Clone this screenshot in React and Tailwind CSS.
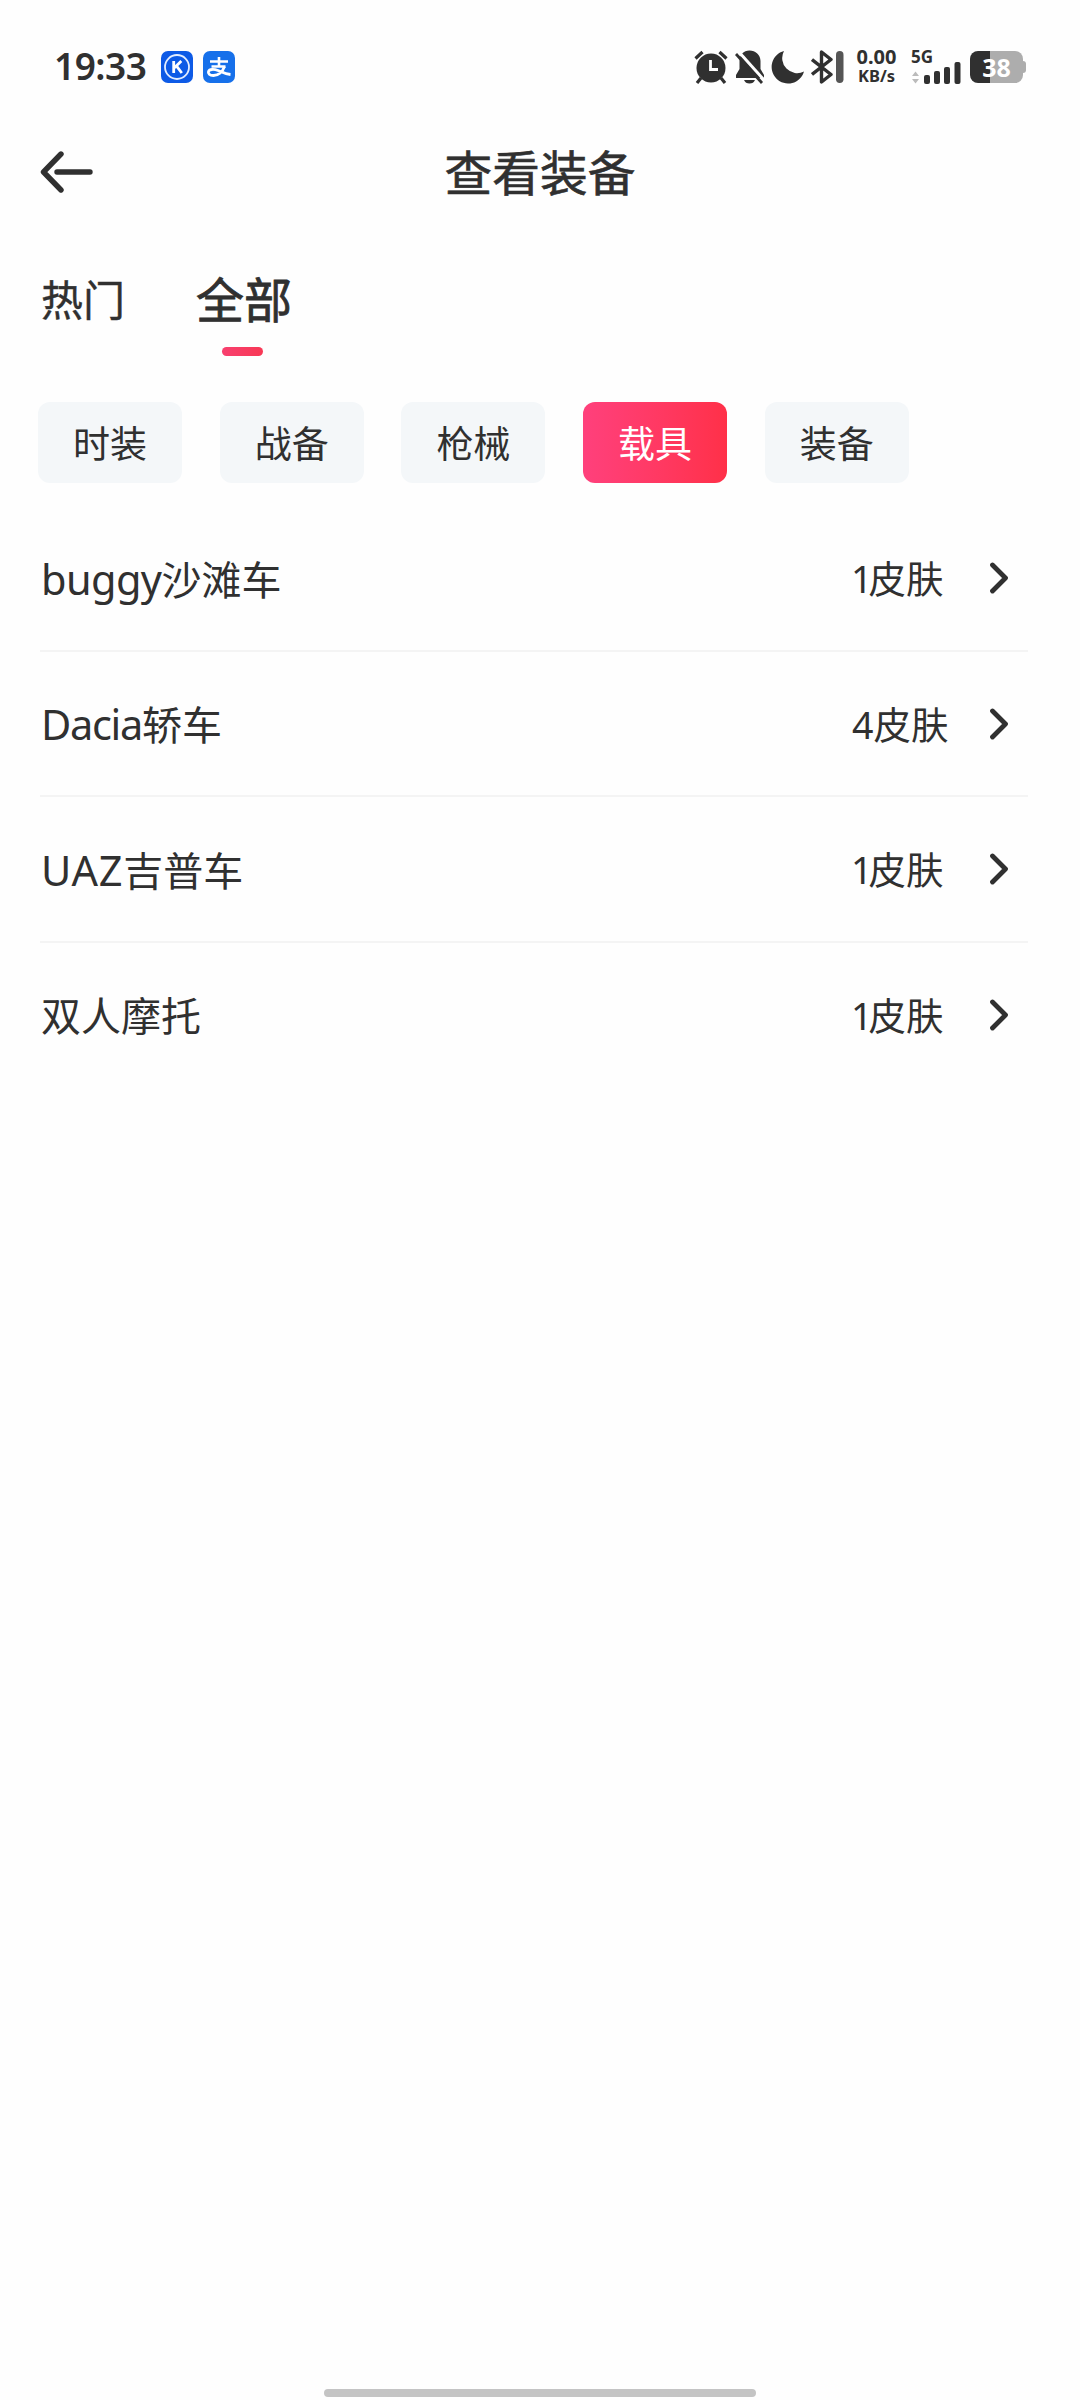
import React, { useState } from "react";

const tabs = ["热门", "全部"];
const categories = ["时装", "战备", "枪械", "载具", "装备"];
const vehicles = [
  { latin: "buggy", name: "沙滩车", skins: 1, spacing: "tracking-[-0.6px]" },
  { latin: "Dacia", name: "轿车", skins: 4, spacing: "tracking-[-1.3px]" },
  { latin: "UAZ", name: "吉普车", skins: 1, spacing: "tracking-[0.7px]" },
  { latin: "", name: "双人摩托", skins: 1, spacing: "" },
];

const StatusBar = () => {
  return (
    <div className="flex h-[134px] items-center pl-[54px] pr-[54px] text-[#303030]">
      <div className="w-[107px] whitespace-nowrap pb-[3px] text-[37px] font-semibold leading-none tracking-[-0.5px]">19:33</div>

      {/* App notifications */}
      <svg className="h-8 w-8" viewBox="0 0 32 32">
        <rect width="32" height="32" rx="7" fill="#0d5ae6" />
        <circle cx="16" cy="16" r="12" fill="none" stroke="#e3edff" strokeWidth="1.8" />
        <path d="M12.7 10v12M20.3 10l-6.8 6.7M15.6 15.2l5.2 6.8" fill="none" stroke="#fff" strokeWidth="2.8" />
      </svg>
      <svg className="ml-[10px] h-8 w-8" viewBox="0 0 32 32" fill="none" stroke="#fff">
        <rect width="32" height="32" rx="7" fill="#1670ea" stroke="none" />
        <path d="M7 10.500h18M16 6v9.500M8.500 15.500h14" strokeWidth="2.600" />
        <path d="M21.500 15.500C19.500 21 15 24.500 10.500 24.500C6.500 24.500 4.800 22.500 5.500 20.500C6.500 18 11 18 15 19.500C19 21 22 23 27.500 23.500" strokeWidth="2.800" />
      </svg>

      <div className="ml-auto flex items-center">
        {/* Alarm */}
        <svg className="h-[34px] w-[34px]" viewBox="0 0 34 34">
          <circle cx="17" cy="18" r="14.5" fill="#303030" />
          <path d="M1.500 8.500l7-6.500M32.500 8.500l-7-6.500M7 28l-4 5M27 28l4 5" stroke="#303030" strokeWidth="3.2" />
          <path d="M16.500 10v9.500h7.500" fill="none" stroke="#fff" strokeWidth="2.8" />
        </svg>
        {/* Muted bell */}
        <svg className="ml-[7px] h-[34px] w-[30px]" viewBox="0 0 30 34">
          <path d="M14.500 0.500C20.500 0.500 25.500 5 25.500 11v8l3.500 6v3H1v-3l3.500-6v-8C4.500 5 8.500 0.500 14.500 0.500z" fill="#303030" />
          <path d="M9 30h11q-1.500 3.500-5.500 3.500T9 30z" fill="#303030" />
          <path d="M3.500 1.500L30 31" stroke="#fefefe" strokeWidth="3" />
          <path d="M1 4L27 33" stroke="#303030" strokeWidth="2.800" />
        </svg>
        {/* Do not disturb */}
        <svg className="ml-[6px] h-[34px] w-[34px]" viewBox="0 0 34 34">
          <path d="M13 1A16.500 16.500 0 1 0 33 21.500A15 15 0 0 1 13 1z" fill="#303030" />
        </svg>
        {/* Bluetooth */}
        <svg className="ml-[6px] h-[34px] w-[33px]" viewBox="0 0 33 34">
          <path d="M1 9.500L20 24.500L10.500 32V2L20 9.500L1 24.500" fill="none" stroke="#303030" strokeWidth="3.400" strokeLinejoin="round" />
          <rect x="25" y="1" width="7.500" height="32" rx="3.700" fill="#555" />
        </svg>

        <div className="ml-[11px] flex w-[43px] flex-col items-center font-bold">
          <span className="text-[20px] leading-[18px]">0.00</span>
          <span className="text-[16.500px] leading-[20px]">KB/s</span>
        </div>

        {/* Signal */}
        <div className="ml-[13px] flex h-[34px] w-[50px] flex-col">
          <span className="h-3 text-[17px] font-bold leading-[13px]">5G</span>
          <svg className="h-[22px] w-[50px]" viewBox="0 12 50 22">
            <path d="M4.500 21.500l3.500 4.500H1zM4.500 33.500l3.500-4.500H1z" fill="#bbb" />
            <rect x="13" y="25" width="6" height="9" rx="2" fill="#303030" />
            <rect x="23" y="21" width="6" height="13" rx="2" fill="#303030" />
            <rect x="33" y="17" width="6" height="17" rx="2" fill="#303030" />
            <rect x="43.500" y="12" width="6" height="22" rx="2" fill="#303030" />
          </svg>
        </div>

        {/* Battery */}
        <div className="ml-[9px] flex items-center">
          <div className="flex h-8 w-[53px] items-center justify-center rounded-[8px] bg-linear-to-r from-[#303030] from-37% to-[#adadad] to-37% text-[25px] font-bold leading-none text-white">
            38
          </div>
          <div className="h-3 w-[3px] rounded-r-sm bg-[#adadad]"></div>
        </div>
      </div>
    </div>
  );
};

const App = () => {
  const [activeTab, setActiveTab] = useState("全部");
  const [activeCategory, setActiveCategory] = useState("载具");

  return (
    <div className="flex h-[2400px] w-[1080px] flex-col bg-[#fefefe] font-['Noto_Sans','Noto_Sans_CJK_SC',sans-serif] text-[#303030]">
      <StatusBar />

      {/* Header */}
      <div className="flex h-[78px] items-center px-10">
        <button className="w-[60px]">
          <svg className="mb-[3px] h-[44px] w-[54px]" viewBox="0 0 54 44" fill="none" stroke="#303030" strokeWidth="5.400" strokeLinecap="round" strokeLinejoin="round">
            <path d="M21 4L3.500 22L21 40M17 22h33" />
          </svg>
        </button>
        <h1 className="flex-1 text-center text-[47.700px] leading-none [-webkit-text-stroke:0.6px]">查看装备</h1>
        <div className="w-[60px]"></div>
      </div>

      {/* Tabs */}
      <div className="flex h-[190px] gap-[71px] pl-[41px] pt-[61px]">
        {tabs.map((tab) => (
          <button key={tab} className="flex h-[84px] flex-col items-center" onClick={() => setActiveTab(tab)}>
            <span
              className={`flex h-[54px] items-center leading-none ${
                activeTab === tab ? "text-[48px] [-webkit-text-stroke:0.8px]" : "text-[42px] [-webkit-text-stroke:0.4px]"
              }`}
            >
              {tab}
            </span>
            {activeTab === tab && (
              <span className="mr-1 mt-5 h-[9px] w-[41px] rounded-full bg-linear-to-r from-[#f8406f] to-[#f83855]"></span>
            )}
          </button>
        ))}
      </div>

      {/* Categories */}
      <div className="flex gap-[37.700px] pl-[38px]">
        {categories.map((category) => (
          <button
            key={category}
            className={`h-[81px] w-36 rounded-xl pt-px text-[37px] leading-none ${
              activeCategory === category ? "bg-linear-to-r from-[#ff407c] to-[#ff3048] text-white" : "bg-[#f4f7f9]"
            }`}
            onClick={() => setActiveCategory(category)}
          >
            {category}
          </button>
        ))}
      </div>

      {/* Vehicle list */}
      <div className="ml-10 mt-[23px] w-[988px]">
        {vehicles.map((vehicle) => (
          <div key={vehicle.name} className="flex h-[145.700px] items-center border-b-2 border-[#f4f4f4] last:border-transparent">
            <span className="flex flex-1 items-baseline pl-px pt-[3px] text-[40px] leading-none">
              <span className={`text-[41.500px] leading-none ${vehicle.spacing}`}>{vehicle.latin}</span>
              {vehicle.name}
            </span>
            <span className="w-[137px] pt-[2px] text-[37.500px] leading-none">
              <span className={vehicle.skins === 1 ? "-ml-px tracking-[-4px]" : ""}>{vehicle.skins}</span>皮肤
            </span>
            <svg className="mr-[19px] h-8 w-5" viewBox="0 0 20 32" fill="none" stroke="#303030" strokeWidth="4.800" strokeLinecap="round" strokeLinejoin="round">
              <path d="M3.500 3L16.500 16L3.500 29" />
            </svg>
          </div>
        ))}
      </div>

      {/* Home indicator */}
      <div className="mx-auto mb-[3px] mt-auto h-2 w-[432px] rounded-full bg-[#c4c4c4]"></div>
    </div>
  );
};

export default App;
